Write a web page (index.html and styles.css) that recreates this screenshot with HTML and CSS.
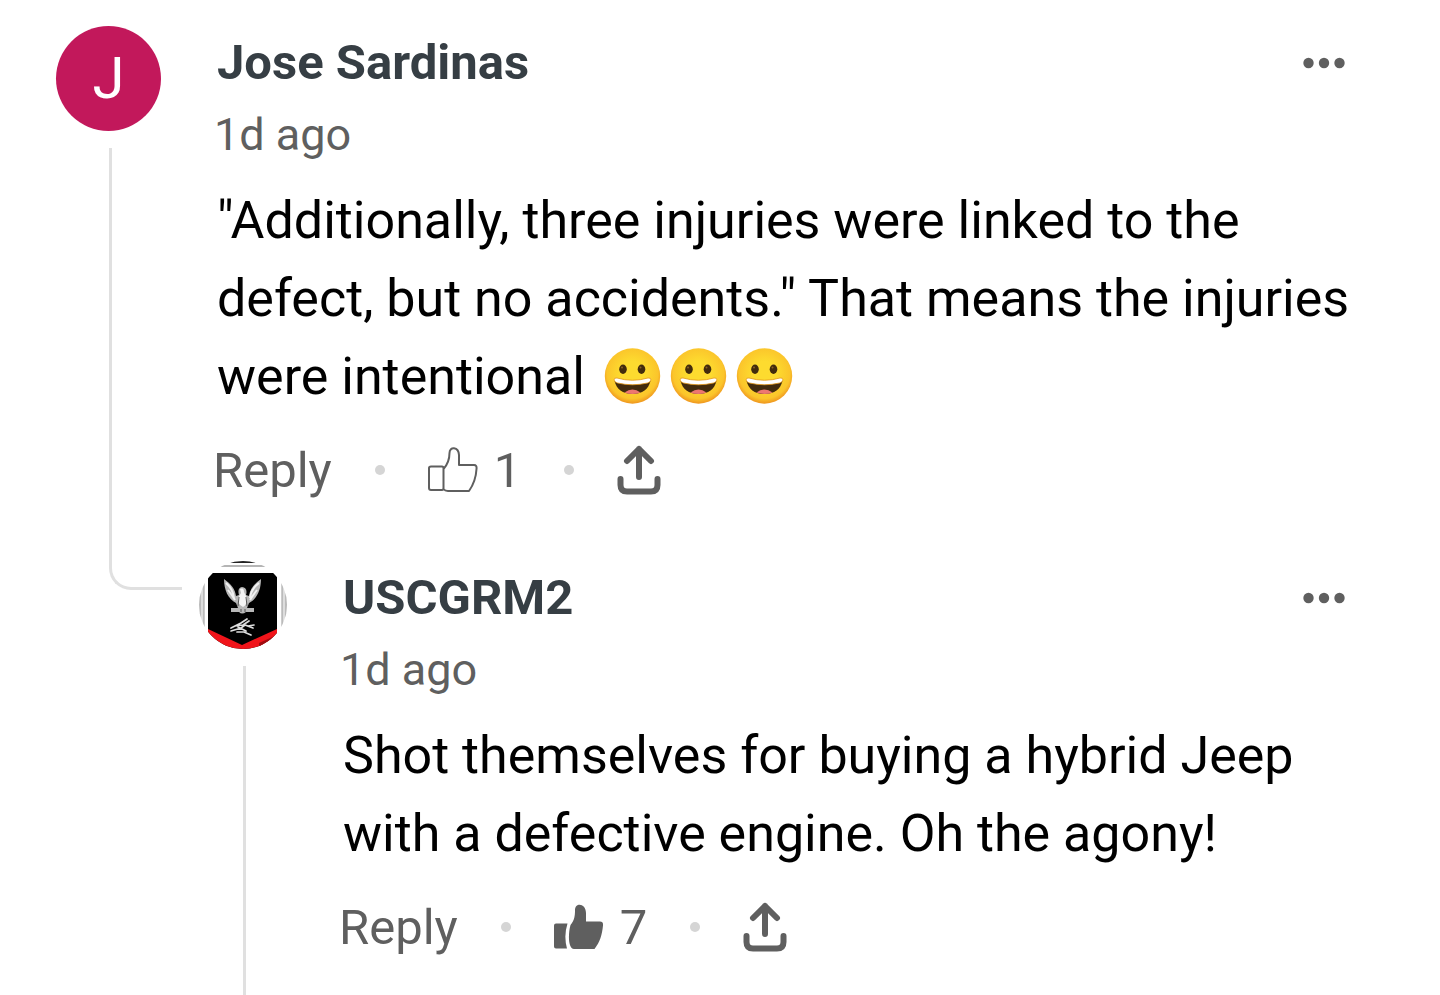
FILE: index.html
```
<!DOCTYPE html>
<html lang="en">
<head>
    <meta charset="UTF-8">
    <meta name="viewport" content="width=device-width, initial-scale=1.0">
    <title>Comments</title>
    <link rel="stylesheet" href="styles.css">
</head>
<body>
    <!-- Shared icons -->
    <svg class="sprite" aria-hidden="true">
        <symbol id="dots" viewBox="0 0 42 12">
            <circle cx="5.500" cy="6" r="5.200"/><circle cx="21" cy="6" r="5.200"/><circle cx="36.500" cy="6" r="5.200"/>
        </symbol>
        <symbol id="share" viewBox="0 0 44 50">
            <path d="M22 32V4M10 16 22 4l12 12M3.500 34v6q0 6.500 6.500 6.500h24q6.500 0 6.500-6.500v-6" fill="none" stroke="currentColor" stroke-width="6" stroke-linecap="round" stroke-linejoin="round"/>
        </symbol>
        <symbol id="like" viewBox="0 0 50 46">
            <path d="M3 19.500H14q1.500 0 1.500 1.500V41q0 2-1.500 2H3q-2 0-2-2V21q0-1.500 2-1.500ZM15.500 22C20 17 21.500 13 21.500 6c0-7 9-6.500 9.500 2v10H46q3 0 2.500 4C48 31 46 37 41 44H20q-3 0-4.500-2" fill="none" stroke="currentColor" stroke-width="2" stroke-linejoin="round"/>
        </symbol>
        <symbol id="liked" viewBox="0 0 50 46">
            <path d="M2 19.500H13.500Q9.500 32 13 44.500H2q-2 0-2-2v-21q0-2 2-2ZM16.500 21c4-5 4.500-9 4.500-15 0-8 11-7 11 3v8.500h14q3.500 0 3 4C48 31 46 38 40.500 45H20c-6 0-6-15-3.500-24Z"/>
        </symbol>
        <radialGradient id="face" cx="50%" cy="45%" r="54%">
            <stop offset="40%" stop-color="#fddb2f"/><stop offset="85%" stop-color="#fbc52b"/><stop offset="100%" stop-color="#f09a20"/>
        </radialGradient>
        <symbol id="grin" viewBox="0 0 56 56">
            <circle cx="28" cy="28" r="27.700" fill="url(#face)"/>
            <ellipse cx="18.500" cy="21.300" rx="3.800" ry="4.700" fill="#422b0d"/>
            <ellipse cx="37" cy="21.300" rx="3.800" ry="4.700" fill="#422b0d"/>
            <circle cx="17.500" cy="19.500" r="1" fill="#896024"/><circle cx="36" cy="19.500" r="1" fill="#896024"/>
            <path d="M10 33q18 4 36 0c-2 8-8 13-18 13s-16-5-18-13Z" fill="#422b0d"/>
            <path d="M20 44.500q8-6 16 0-8 3-16 0Z" fill="#ed7770"/>
            <path d="M9.500 32q0-2.500 3-2 15.500 4.500 31 0 3-.5 3 2-1 2.500-3.500 3-15 3.500-30 0-2.500-.5-3.500-3Z" fill="#fff" stroke="#e59819" stroke-width=".8"/>
        </symbol>
    </svg>

    <main class="thread">
        <article class="comment">
            <div class="side">
                <div class="avatar letter">J</div>
                <div class="rail"></div>
            </div>
            <div class="body">
                <header class="head">
                    <h2 class="name">Jose Sardinas</h2>
                    <button class="icon-btn" type="button" aria-label="More options"><svg class="dots"><use href="#dots"/></svg></button>
                </header>
                <div class="time">1d ago</div>
                <p class="text">"Additionally, three injuries were linked to the defect, but no accidents." That means the injuries were intentional <span class="emojis"><svg class="emoji"><use href="#grin"/></svg><svg class="emoji"><use href="#grin"/></svg><svg class="emoji"><use href="#grin"/></svg></span></p>
                <div class="actions">
                    <button class="reply-btn" type="button">Reply</button>
                    <span class="sep"></span>
                    <button class="like-btn" type="button" aria-label="Like, 1"><svg class="thumb"><use href="#like"/></svg>1</button>
                    <span class="sep"></span>
                    <button class="icon-btn" type="button" aria-label="Share"><svg class="share"><use href="#share"/></svg></button>
                </div>
            </div>
        </article>

        <article class="comment reply">
            <div class="elbow"></div>
            <div class="side">
                <svg class="avatar" viewBox="0 0 88 88" role="img" aria-label="USCGRM2">
                    <rect width="88" height="88" fill="#fff"/>
                    <path d="M16 0h56v2H16z" fill="#222"/>
                    <path d="M0 4h88v2H0z" fill="#b5b5b5"/>
                    <path d="M0 20v60h5V20zM83 15v65h5V15z" fill="#ddd"/>
                    <path d="M1 20v60M5 20v60M83 15v65M87 15v65" stroke="#999"/>
                    <!-- Shield and chevron -->
                    <path d="M9 14q0-2 2-2h65q2 0 2 2v74H9z" fill="#000"/>
                    <path d="M9 68 43 84l35-16v20H9z" fill="#f0141a"/>
                    <path d="m60 82 18-8v6L60 87z" fill="#a00c10"/>
                    <!-- Eagle -->
                    <path d="M25 18c7 5 11 10 12 17l3-1q-2-7 3-8 6 1 4 8l3 1c1-7 5-12 12-17 0 11-4 20-12 24l-2 5h7v4h-8q-4 3-7 0h-8v-4h7l-2-5C29 38 25 29 25 18Z" fill="#b8b8b8"/>
                    <path d="M27 22q7 6 8 15M29 29q4 5 7 10M60 22q-8 6-9 15M58 29q-4 5-7 10" stroke="#f2f2f2" stroke-width="2" fill="none"/>
                    <path d="M41 28q4-2 4 3l3 6q0 7-4 9-6-3-5-9l3-5Z" fill="#f5f5f5"/>
                    <path d="m40 36-1 9M47 36l1 9M42 48v3M46 48v3" stroke="#555" fill="none"/>
                    <!-- Lightning bolts -->
                    <path d="m32 67 10-5 6-4M36 65l8-1 6-4M32 70l10-3 4-3 8 3M39 66l8 4M38 71l7 0 7 3M49 65l6-1" stroke="#ddd" stroke-width="1.700" stroke-linecap="round" fill="none"/>
                </svg>
                <div class="rail"></div>
            </div>
            <div class="body">
                <header class="head">
                    <h2 class="name">USCGRM2</h2>
                    <button class="icon-btn" type="button" aria-label="More options"><svg class="dots"><use href="#dots"/></svg></button>
                </header>
                <div class="time">1d ago</div>
                <p class="text">Shot themselves for buying a hybrid Jeep with a defective engine. Oh the agony!</p>
                <div class="actions">
                    <button class="reply-btn" type="button">Reply</button>
                    <span class="sep"></span>
                    <button class="like-btn" type="button" aria-label="Like, 7"><svg class="thumb"><use href="#liked"/></svg>7</button>
                    <span class="sep"></span>
                    <button class="icon-btn" type="button" aria-label="Share"><svg class="share"><use href="#share"/></svg></button>
                </div>
            </div>
        </article>
    </main>
</body>
</html>
```
FILE: styles.css
```
* { box-sizing: border-box; }

body {
    margin: 0;
    background: #fff;
    color: #000;
    font-family: Roboto, "Liberation Sans", sans-serif;
}
svg { display: block; fill: currentColor; }
.sprite { position: absolute; width: 0; height: 0; }

button {
    padding: 0;
    border: 0;
    background: none;
    color: #5f5f5f;
    font: inherit;
    cursor: pointer;
}

.thread {
    display: flex;
    flex-direction: column;
    min-height: 100vh;
    padding-top: 26px;
}
.comment {
    display: flex;
    padding: 0 56px;
}

/* Avatar with the thread line under it */
.side {
    display: flex;
    flex-direction: column;
    flex: none;
    width: 105px;
    gap: 17px;
}
.avatar {
    flex: none;
    width: 105px;
    height: 105px;
    border-radius: 50%;
}
.letter {
    background: #c2185b;
    color: #fff;
    font-size: 58px;
    line-height: 105px;
    text-align: center;
}
.rail {
    flex: 1;
    width: 3px;
    margin-left: 53px;
    background: #e0e0e0;
}

.body {
    flex: 1;
    min-width: 0;
    margin-left: 52px;
    padding-bottom: 61px;
}
.head {
    display: flex;
    align-items: center;
    justify-content: space-between;
    padding: 0 39px 0 4px;
}
.name {
    margin: 0;
    color: #363e44;
    font-size: 49px;
    font-weight: 700;
    line-height: 74px;
}
.dots { width: 42px; height: 12px; }
.time {
    padding-left: 1px;
    color: #5f5f5f;
    font-size: 45px;
    line-height: 70px;
}
.text {
    margin: 12px 0 24px 4px;
    font-size: 52px;
    line-height: 78px;
}
.emojis { display: inline-flex; gap: 9px; margin-left: 6px; vertical-align: -10px; }
.emoji { width: 57px; height: 56px; }

.actions {
    display: flex;
    align-items: center;
    height: 60px;
    font-size: 49px;
}
.sep {
    width: 10px;
    height: 10px;
    margin: 0 43px;
    border-radius: 50%;
    background: #d5d5d5;
}
.like-btn { display: flex; align-items: center; gap: 16px; }
.thumb { width: 50px; height: 46px; }
.share { width: 44px; height: 50px; }

/* Nested reply */
.reply { flex: 1; padding-left: 109px; }
.reply .side { width: 88px; margin-left: 17px; }
.reply .avatar { width: 88px; height: 88px; }
.reply .rail { margin-left: 44px; }
.elbow {
    flex: none;
    width: 73px;
    height: 29px;
    border: solid #e0e0e0;
    border-width: 0 0 3px 3px;
    border-bottom-left-radius: 22px;
}
```
